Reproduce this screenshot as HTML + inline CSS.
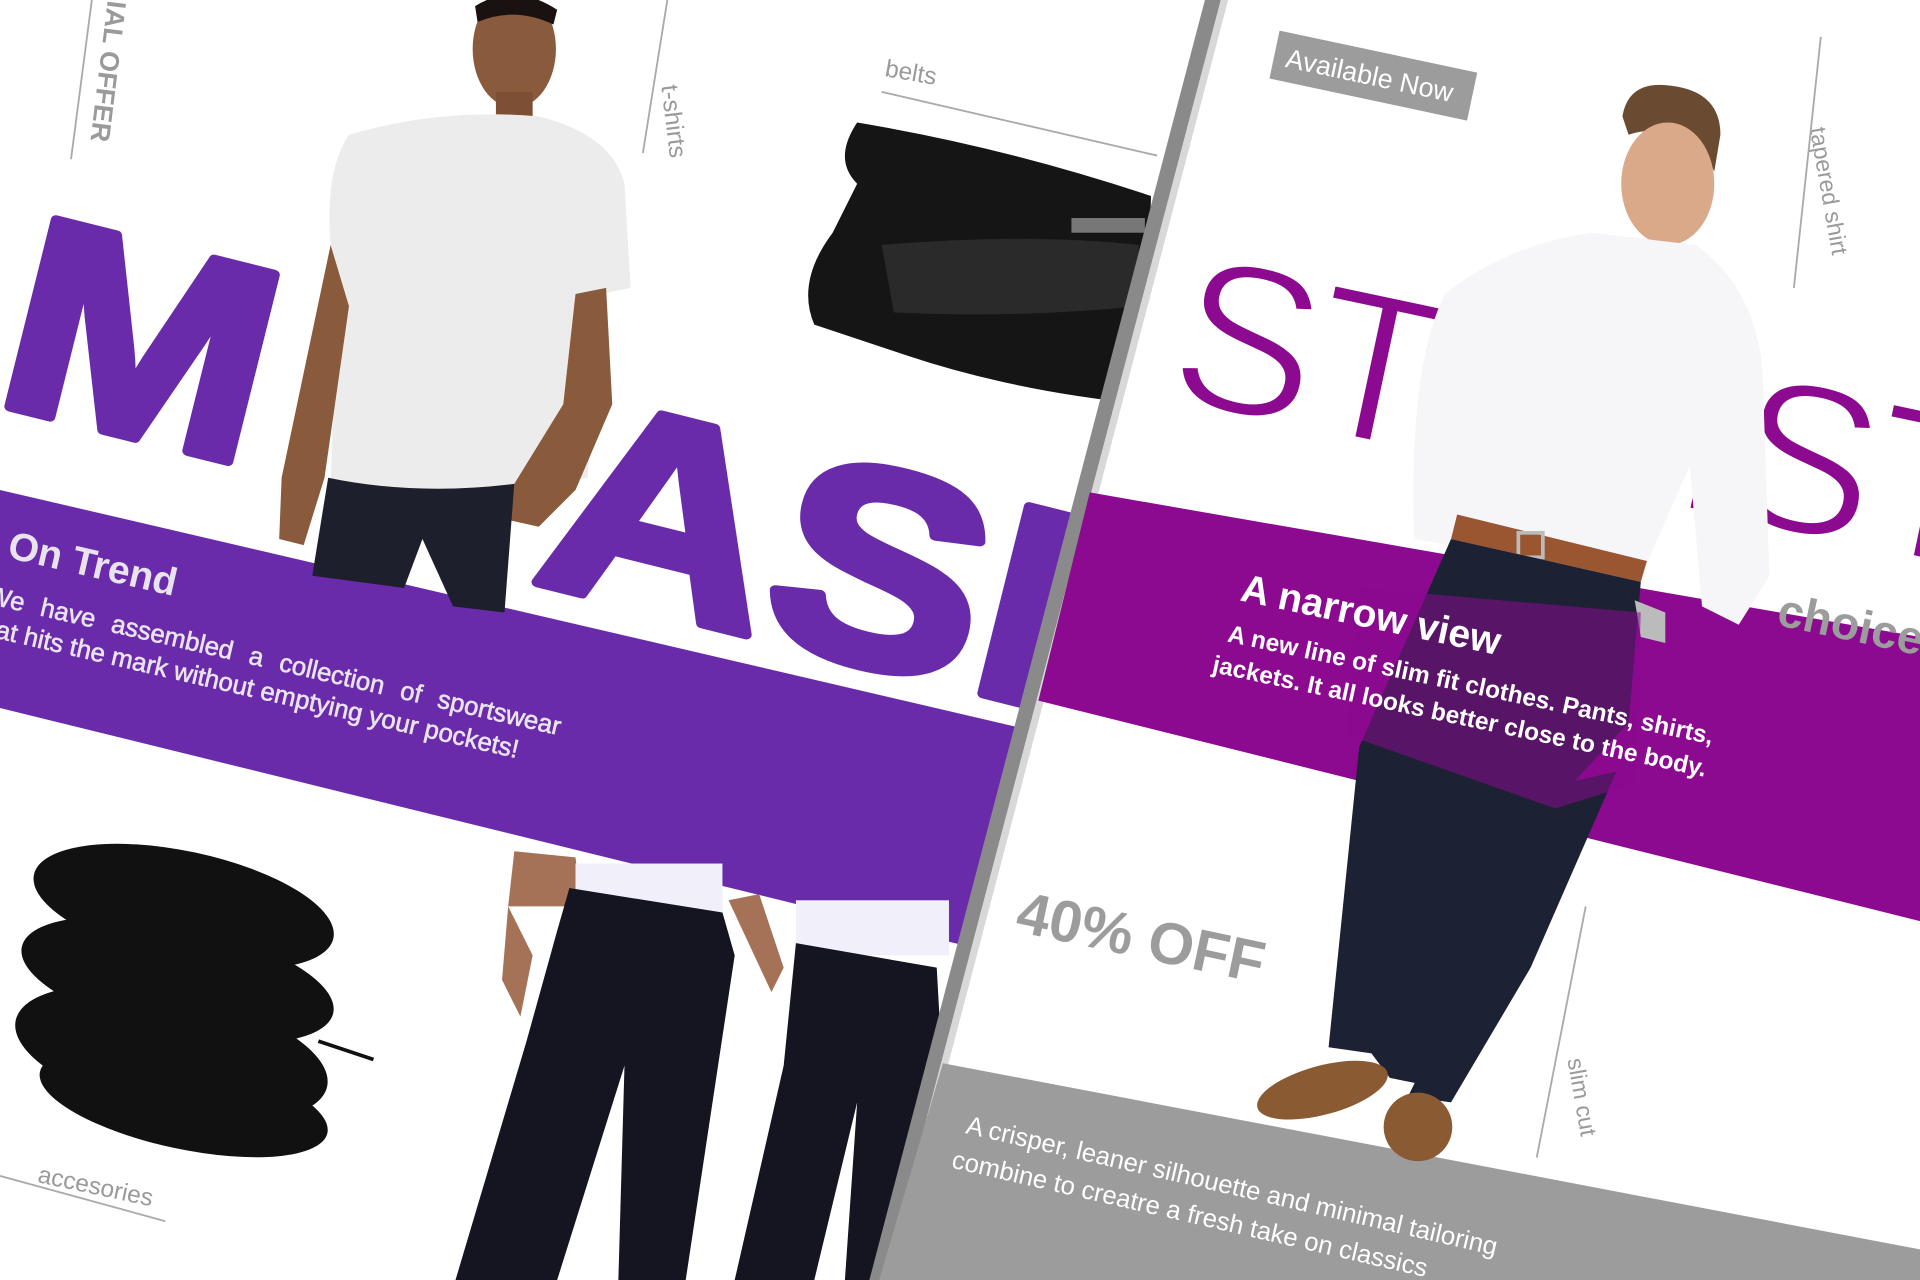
<!DOCTYPE html>
<html><head><meta charset="utf-8"><style>
html,body{margin:0;padding:0;background:#fff;overflow:hidden}
svg{display:block}
text{font-family:"Liberation Sans",Arial,sans-serif}
</style></head><body>
<svg width="1920" height="1280" viewBox="0 0 1568 1045" preserveAspectRatio="none" xmlns="http://www.w3.org/2000/svg">
<rect width="1568" height="1045" fill="#fff"/>
<!-- LEFT PAGE -->
<g transform="translate(0,330) rotate(14)" fill="#6a2bab" stroke="#6a2bab" stroke-width="8" stroke-linejoin="round">
  <text x="-8" y="0" font-size="228" font-weight="bold" transform="scale(1.15,1)">M</text>
  <text x="395" y="35" font-size="228" font-weight="bold" transform="scale(1.15,1)">ASH</text>
</g>
<polygon points="0,400 880,605 800,775 0,578" fill="#6a2bab"/>
<g transform="translate(5,455) rotate(13)" fill="#e8e3ee">
  <text x="0" y="0" font-size="32" font-weight="bold">On Trend</text>
  <text x="-8" y="40" font-size="21" word-spacing="8" stroke="#e8e3ee" stroke-width="0.5">We have assembled a collection of sportswear</text>
  <text x="-12" y="66" font-size="21" stroke="#e8e3ee" stroke-width="0.5">that hits the mark without emptying your pockets!</text>
</g>
<!-- man 1 -->
<g>
  <ellipse cx="420" cy="40" rx="34" ry="48" fill="#8a5a3c"/>
  <path d="M388 5 Q420 -15 455 8 L452 20 Q420 5 390 18Z" fill="#1a1210"/>
  <rect x="405" y="75" width="30" height="30" fill="#7d5035"/>
  <path d="M285 110 Q360 88 440 95 Q500 110 510 150 L515 235 L490 240 L480 390 Q380 410 270 395 L275 250 L270 200 Q265 140 285 110Z" fill="#ececec"/>
  <path d="M270 200 L230 390 L228 440 L248 445 L265 390 L285 250Z" fill="#8a5a3c"/>
  <path d="M495 235 L500 330 L470 400 L440 430 L395 420 L420 395 L460 330 L470 240Z" fill="#8a5a3c"/>
  <path d="M268 390 Q340 405 420 395 L412 500 L370 495 L345 440 L330 480 L255 470Z" fill="#1d1f2c"/>
</g>
<!-- belt -->
<path d="M700 100 Q820 120 940 160 L935 330 Q830 320 740 290 L665 265 Q650 230 680 190 L700 150 Q680 130 700 100Z" fill="#151515"/>
<path d="M720 200 Q840 190 930 200 L930 250 Q830 260 730 255Z" fill="#2a2a2a"/>
<rect x="875" y="178" width="60" height="12" fill="#777"/>
<!-- bracelet -->
<g fill="#111">
  <ellipse cx="150" cy="740" rx="125" ry="45" transform="rotate(12 150 740)"/>
  <ellipse cx="145" cy="800" rx="130" ry="45" transform="rotate(12 145 800)"/>
  <ellipse cx="140" cy="860" rx="130" ry="50" transform="rotate(12 140 860)"/>
  <ellipse cx="150" cy="900" rx="120" ry="38" transform="rotate(12 150 900)"/>
</g>
<path d="M260 850 L305 865" stroke="#111" stroke-width="3"/>
<!-- pants -->
<g>
  <path d="M420 695 L470 700 L475 740 L415 740Z" fill="#a57258"/>
  <rect x="470" y="705" width="120" height="40" fill="#f0effa"/>
  <rect x="650" y="735" width="125" height="45" fill="#f0effa"/>
  <path d="M465 725 L590 745 L600 780 L560 1045 L505 1045 L510 870 L455 1045 L372 1045 L430 850 L455 760Z" fill="#151521"/>
  <path d="M650 770 L765 790 L770 880 L745 1045 L690 1045 L700 900 L665 1045 L600 1045 L640 870Z" fill="#151521"/>
  <path d="M415 740 L410 800 L425 830 L435 780Z" fill="#a57258"/>
  <path d="M595 735 L620 730 L640 790 L630 810Z" fill="#a57258"/>
</g>
<!-- labels left -->
<text transform="translate(88,0) rotate(97)" font-size="22" font-weight="bold" fill="#9a9a9a">IAL OFFER</text>
<line x1="58" y1="130" x2="75" y2="0" stroke="#aaa" stroke-width="1.5"/>
<text transform="translate(540,70) rotate(83)" font-size="20" fill="#9a9a9a">t-shirts</text>
<line x1="525" y1="125" x2="545" y2="0" stroke="#aaa" stroke-width="1.5"/>
<text transform="translate(722,62) rotate(10)" font-size="20" fill="#9a9a9a">belts</text>
<line x1="720" y1="75" x2="945" y2="127" stroke="#aaa" stroke-width="1.5"/>
<text transform="translate(30,965) rotate(12)" font-size="20" fill="#9a9a9a">accesories</text>
<line x1="0" y1="960" x2="135" y2="997" stroke="#aaa" stroke-width="1.5"/>
<!-- RIGHT PAGE -->
<polygon points="993,0 1568,0 1568,1045 718,1045" fill="#fff"/>
<polygon points="984,0 997,0 722,1045 710,1045" fill="#8a8a8a"/>
<polygon points="997,0 1003,0 728,1045 722,1045" fill="#d8d8d8"/>
<g transform="translate(1045,25) rotate(12)">
  <rect x="0" y="0" width="165" height="40" fill="#9c9c9c"/>
  <text x="10" y="28" font-size="22" fill="#fff">Available Now</text>
</g>
<text transform="translate(950,325) rotate(12)" font-size="175" fill="#8b0a8f" stroke="#fff" stroke-width="4" letter-spacing="-4">STYLIST</text>
<polygon points="890,402 1568,520 1568,752 848,572" fill="#8b0a8f"/>
<text transform="translate(1450,510) rotate(12)" font-size="38" font-weight="bold" fill="#9c9c9c">choice</text>
<text transform="translate(828,760) rotate(12)" font-size="48" font-weight="bold" fill="#9c9c9c">40% OFF</text>
<polygon points="770,868 1568,1020 1568,1045 718,1045" fill="#9c9c9c"/>
<g transform="translate(788,925) rotate(13)" fill="#fff" font-size="21">
  <text x="0" y="0">A crisper, leaner silhouette and minimal tailoring</text>
  <text x="-5" y="30">combine to creatre a fresh take on classics</text>
</g>
<!-- man 2 -->
<g>
  <path d="M1325 95 Q1330 65 1365 70 Q1405 75 1405 110 L1400 140 L1390 120 Q1360 100 1330 110Z" fill="#6b4a32"/>
  <ellipse cx="1362" cy="150" rx="38" ry="50" fill="#d9a98a"/>
  <path d="M1300 190 L1385 200 Q1440 240 1440 320 L1445 470 L1420 510 L1390 495 L1380 380 L1345 460 Q1260 440 1190 420 L1185 445 L1155 440 Q1150 300 1180 240 Q1230 200 1300 190Z" fill="#f6f6f8"/>
  <path d="M1190 420 L1345 458 L1340 475 L1185 440Z" fill="#9a5531"/>
  <rect x="1240" y="435" width="20" height="20" fill="none" stroke="#bbb" stroke-width="3"/>
  <path d="M1185 440 L1340 475 L1330 590 L1270 655 L1185 890 L1135 880 L1120 860 L1085 855 L1110 610Z" fill="#1c2233"/>
  <path d="M1275 640 L1320 630 L1250 790 L1185 900 L1150 895Z" fill="#1c2233"/>
  <ellipse cx="1080" cy="890" rx="55" ry="20" fill="#8a5a32" transform="rotate(-15 1080 890)"/>
  <ellipse cx="1158" cy="920" rx="28" ry="28" fill="#8a5a32"/>
  <path d="M1335 490 L1360 500 L1360 525 L1340 520Z" fill="#bbb"/>
  <polygon points="1110,480 1340,500 1335,640 1270,660 1100,600" fill="#8b0a8f" opacity="0.55"/>
</g>
<g transform="translate(1012,490) rotate(12)" fill="#fff">
  <text x="0" y="0" font-size="32" font-weight="bold">A narrow view</text>
  <text x="-3" y="35" font-size="20" font-weight="bold">A new line of slim fit clothes. Pants, shirts,</text>
  <text x="-10" y="62" font-size="20" font-weight="bold">jackets. It all looks better close to the body.</text>
</g>
<text transform="translate(1478,105) rotate(80)" font-size="19" fill="#9a9a9a">tapered shirt</text>
<line x1="1465" y1="235" x2="1487" y2="30" stroke="#aaa" stroke-width="1.5"/>
<text transform="translate(1280,865) rotate(80)" font-size="19" fill="#9a9a9a">slim cut</text>
<line x1="1255" y1="945" x2="1295" y2="740" stroke="#aaa" stroke-width="1.5"/>
</svg>
</body></html>
